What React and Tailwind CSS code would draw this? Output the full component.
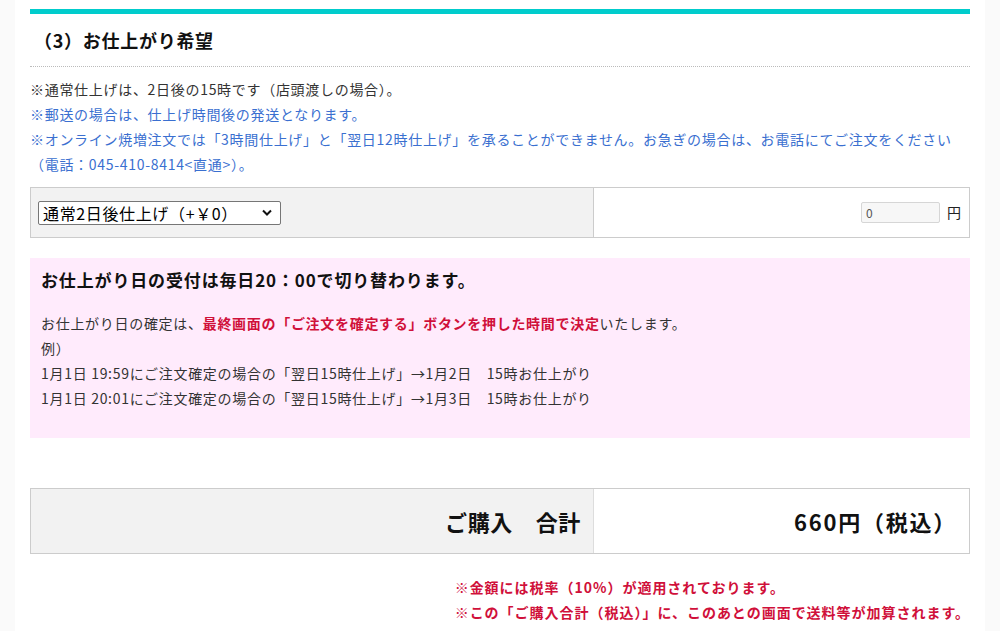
import React from 'react'

const font = { fontFamily: '"Noto Sans CJK JP", "Liberation Sans", sans-serif' }

export default function App() {
  return (
    <div className="min-h-[631px] bg-[#fafafa]" style={font}>
      <div className="mx-auto w-[970px] bg-white px-[15px] pt-[9px] pb-[20px]">
        {/* heading */}
        <div className="border-t-[5px] border-[#00cccc]">
          <h2 className="flex h-[53px] items-center border-b border-dotted border-[#bbbbbb] pl-[4px] text-[18px] font-bold tracking-[0.04em] text-[#111111]">
            （3）お仕上がり希望
          </h2>
        </div>

        {/* notes */}
        <div className="mt-[10px] text-[14px] leading-[25px] tracking-[0.05em]">
          <p className="text-[#333333]">※通常仕上げは、2日後の15時です（店頭渡しの場合）。</p>
          <p className="text-[#3a6fd0]">※郵送の場合は、仕上げ時間後の発送となります。</p>
          <p className="text-[#3a6fd0]">
            ※オンライン焼増注文では「3時間仕上げ」と「翌日12時仕上げ」を承ることができません。お急ぎの場合は、お電話にてご注文をください
            <br />
            （電話：045-410-8414&lt;直通&gt;）。
          </p>
        </div>

        {/* select row */}
        <div className="mt-[10px] flex h-[51px] border border-[#cccccc]">
          <div className="flex w-[563px] items-center border-r border-[#cccccc] bg-[#f2f2f2] pl-[7px]">
            <div className="flex h-[24px] w-[243px] items-center justify-between rounded-[2px] border border-[#767676] bg-white pl-[4px] pr-[8px] text-[16px] tracking-[0.04em] text-black">
              <span>通常2日後仕上げ（+￥0）</span>
              <svg width="10" height="7" viewBox="0 0 10 7">
                <path d="M1 1.5 L5 5.5 L9 1.5" fill="none" stroke="#111" strokeWidth="2" />
              </svg>
            </div>
          </div>
          <div className="flex flex-1 items-center justify-end gap-[7px] bg-white pr-[8px]">
            <div className="flex h-[21px] w-[79px] items-center rounded-[2px] border border-[#d6d6d6] bg-[#f7f7f7] pl-[4px] text-[12px] text-[#555555]">
              0
            </div>
            <span className="text-[14px] text-[#222222]">円</span>
          </div>
        </div>

        {/* pink notice */}
        <div className="mt-[20px] h-[180px] bg-[#ffebfc] px-[11px] pt-[10px]">
          <p className="text-[17px] font-bold leading-[24px] tracking-[0.05em] text-[#111111]">お仕上がり日の受付は毎日20：00で切り替わります。</p>
          <div className="mt-[19px] text-[14px] leading-[25px] tracking-[0.05em] text-[#333333]">
            <p>
              お仕上がり日の確定は、
              <span className="font-bold text-[#d0103a]">最終画面の「ご注文を確定する」ボタンを押した時間で決定</span>
              いたします。
            </p>
            <p>例）</p>
            <p>1月1日 19:59にご注文確定の場合の「翌日15時仕上げ」→1月2日　15時お仕上がり</p>
            <p>1月1日 20:01にご注文確定の場合の「翌日15時仕上げ」→1月3日　15時お仕上がり</p>
          </div>
        </div>

        {/* total */}
        <div className="mt-[50px] flex h-[66px] border border-[#cccccc]">
          <div className="flex w-[563px] items-center justify-end border-r border-[#dddddd] bg-[#f2f2f2] pr-[12px] text-[22px] font-bold tracking-[0.03em] text-[#111111]">
            ご購入　合計
          </div>
          <div className="flex flex-1 items-center justify-end bg-white pr-[12px] text-[22px] font-bold tracking-[0.08em] text-[#111111]">
            660円（税込）
          </div>
        </div>

        <div className="mt-[21px] flex justify-end">
          <div className="text-[14px] font-bold leading-[25px] tracking-[0.07em] text-[#d0103a]">
            <p>※金額には税率（10%）が適用されております。</p>
            <p>※この「ご購入合計（税込）」に、このあとの画面で送料等が加算されます。</p>
          </div>
        </div>
      </div>
    </div>
  )
}
